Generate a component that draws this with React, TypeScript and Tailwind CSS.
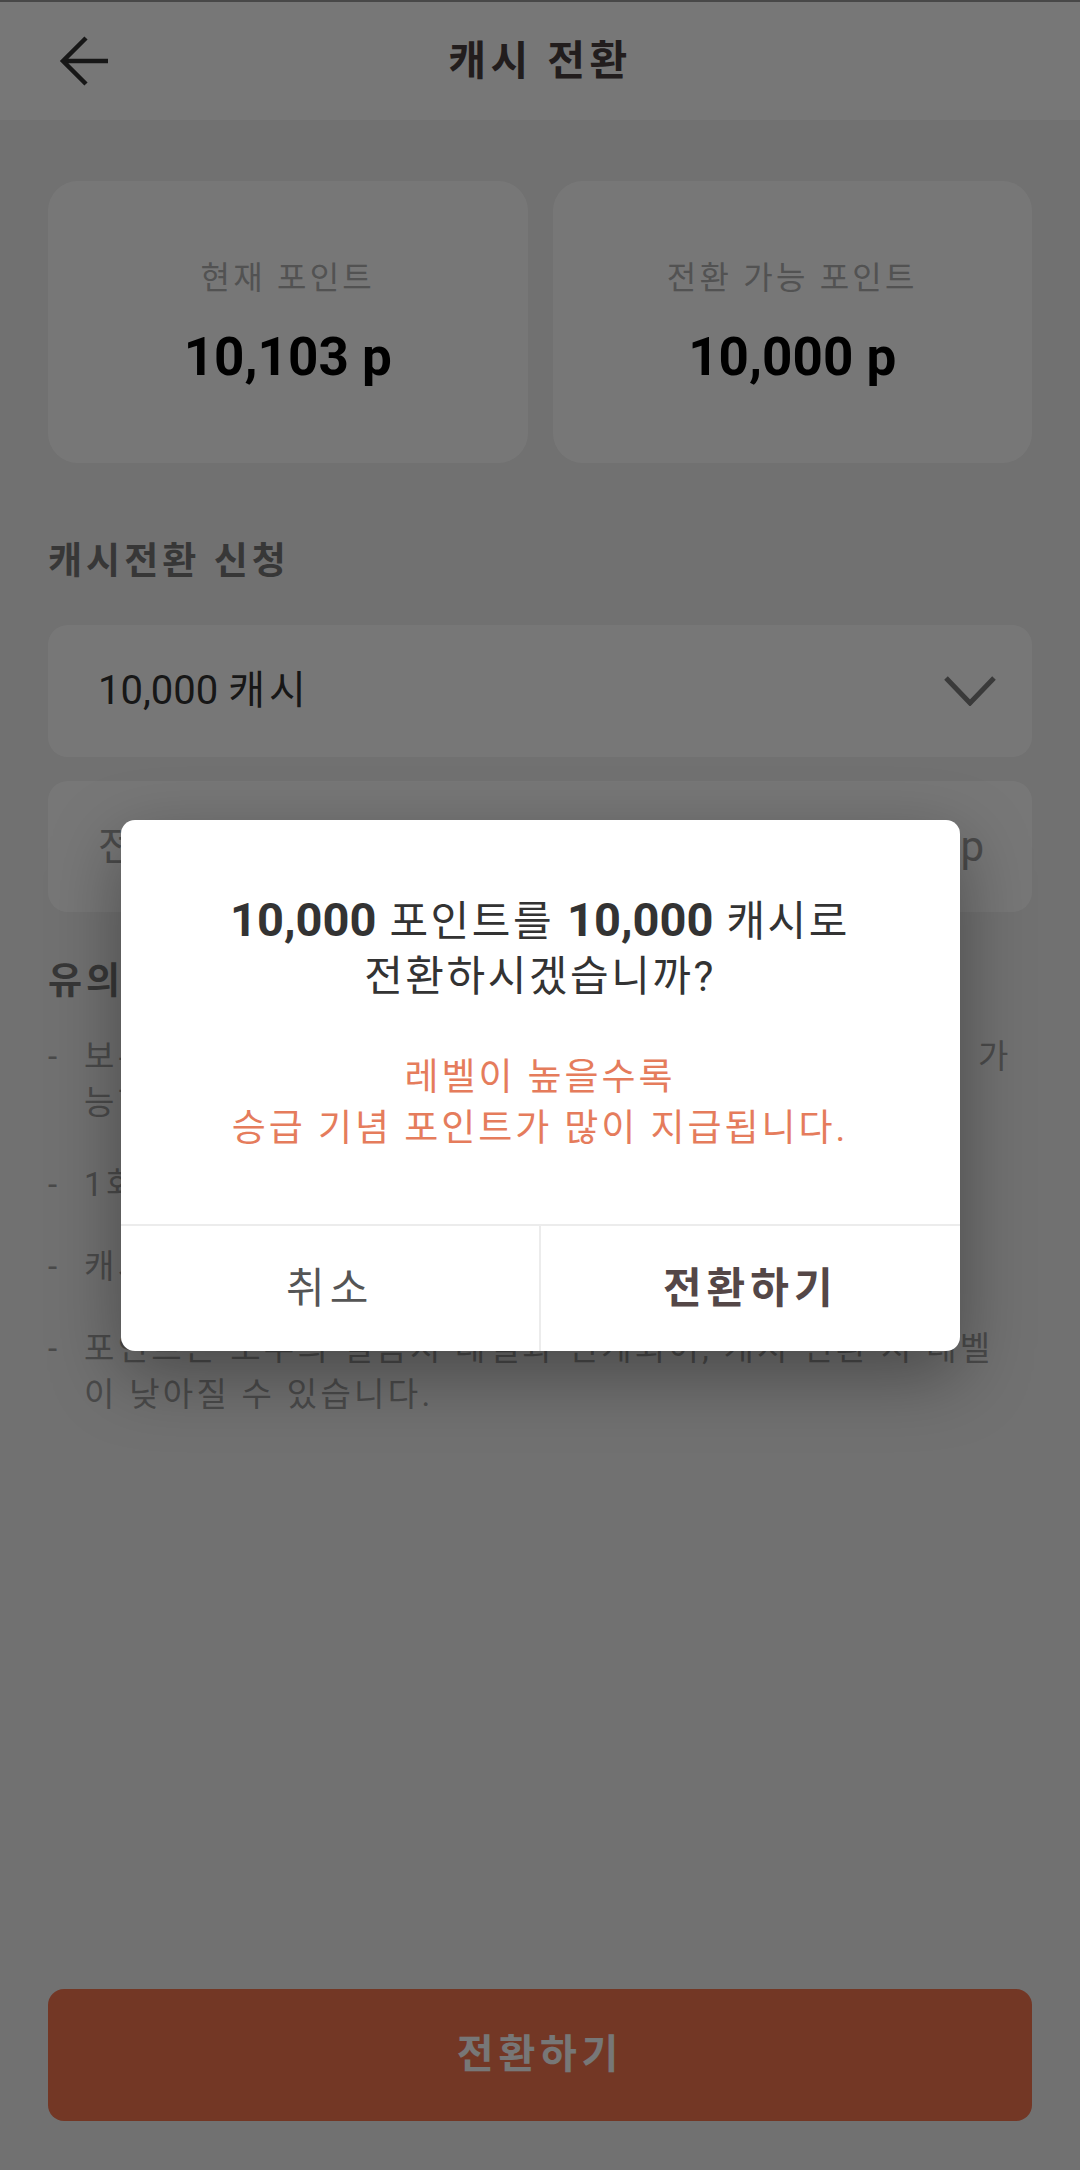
import React from "react";

function Card({ label, value }: { label: string; value: string }) {
  return (
    <div className="h-[282px] rounded-[30px] bg-white flex flex-col items-center pt-[77px]">
      <div className="text-[32px] leading-[40px] tracking-[0.1em] text-[#b0b0b0]">{label}</div>
      <div className="mt-[27px] text-[53px] leading-[64px] font-bold text-black">{value}</div>
    </div>
  );
}

function Bullet({ children }: { children: React.ReactNode }) {
  return (
    <li className="flex">
      <span className="w-[36px] shrink-0">-</span>
      <span className="whitespace-nowrap tracking-[0.1em]">{children}</span>
    </li>
  );
}

export default function App() {
  return (
    <div className="relative min-h-[2170px] w-full bg-[#f2f2f2] font-['Roboto','Noto_Sans_CJK_KR',sans-serif] flex flex-col">
      <header className="h-[120px] bg-white border-t-2 border-[#9a9a9a] grid grid-cols-[1fr_auto_1fr] items-center">
        <div className="pl-[59px] flex items-center">
          <svg width="50" height="50" viewBox="0 0 50 50" fill="none">
            <path d="M49 25H4 M27 2L4 25l23 23" stroke="#333" strokeWidth="4.5" strokeLinejoin="miter" />
          </svg>
        </div>
        <h1 className="text-[41px] font-bold tracking-[0.11em] text-[#4a3f3f] leading-none">캐시 전환</h1>
        <div />
      </header>

      <main className="flex-1 px-[48px]">
        <div className="grid grid-cols-2 gap-[25px] mt-[61px]">
          <Card label="현재 포인트" value="10,103 p" />
          <Card label="전환 가능 포인트" value="10,000 p" />
        </div>

        <h2 className="mt-[74px] text-[37px] font-bold leading-[50px] tracking-[0.11em] text-[#777]">캐시전환 신청</h2>

        <div className="mt-[38px] h-[132px] rounded-[20px] bg-white flex items-center justify-between pl-[50px] pr-[36px]">
          <span className="text-[40px] text-[#333]">
            10,000 <span className="tracking-[0.1em]">캐시</span>
          </span>
          <svg width="52" height="30" viewBox="0 0 52 30" fill="none">
            <path d="M2 2L26 27L50 2" stroke="#7c7c7c" strokeWidth="5" />
          </svg>
        </div>

        <div className="mt-[24px] h-[131px] rounded-[20px] bg-white flex items-center justify-between pl-[50px] pr-[48px]">
          <span className="text-[40px] tracking-[0.1em] text-[#9e9e9e]">전환 포인트</span>
          <span className="text-[42px] text-[#9e9e9e]">10,000 p</span>
        </div>

        <h2 className="mt-[45px] text-[37px] font-bold leading-[50px] tracking-[0.11em] text-[#777]">유의사항</h2>

        <ul className="mt-[27px] flex flex-col gap-[36px] text-[33px] leading-[46px] text-[#9e9e9e]">
          <Bullet>
            보유 포인트가 10,000 포인트 이상일 경우, 캐시로 전환이 가<br />능합니다.
          </Bullet>
          <Bullet>1회 최대 10,000 캐시까지 전환 가능합니다.</Bullet>
          <Bullet>캐시 전환 신청 후 3~5일 이내 지급됩니다.</Bullet>
          <Bullet>
            포인트는 모두의 걸음지 레벨과 연계되어, 캐시 전환 시 레벨<br />이 낮아질 수 있습니다.
          </Bullet>
        </ul>
      </main>

      <div className="px-[48px] pb-[49px]">
        <button className="h-[132px] w-full rounded-[16px] bg-[#f67651] text-white text-[40px] font-bold tracking-[0.12em]">
          전환하기
        </button>
      </div>

      {/* dim overlay */}
      <div className="absolute inset-0 bg-[rgba(0,0,0,0.533)]" />

      {/* dialog */}
      <div className="absolute inset-0 flex items-center justify-center">
        <div className="w-[839px] rounded-[14px] bg-white shadow-[0_24px_70px_rgba(0,0,0,0.35)] overflow-hidden">
          <div className="pt-[72px] pb-[70px] text-center">
            <p className="text-[42px] leading-[55px] tracking-[0.06em] text-[#333]">
              <span className="text-[47px] font-bold tracking-normal">10,000</span> 포인트를{" "}
              <span className="text-[47px] font-bold tracking-normal">10,000</span> 캐시로
              <br />
              전환하시겠습니까?
            </p>
            <p className="mt-[48px] text-[37px] leading-[51px] tracking-[0.08em] text-[#e57c5c]">
              레벨이 높을수록
              <br />
              승급 기념 포인트가 많이 지급됩니다.
            </p>
          </div>
          <div className="flex h-[127px] border-t-2 border-[#ececec]">
            <button className="flex-1 border-r-2 border-[#ececec] text-[42px] tracking-[0.12em] text-[#555]">취소</button>
            <button className="flex-1 text-[42px] font-bold tracking-[0.12em] text-[#544747]">전환하기</button>
          </div>
        </div>
      </div>
    </div>
  );
}
